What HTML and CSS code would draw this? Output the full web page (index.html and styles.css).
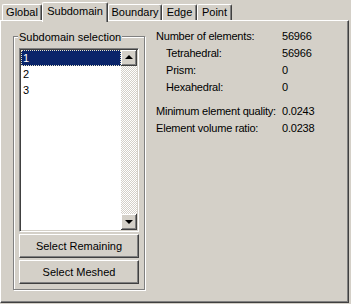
FILE: index.html
```html
<!DOCTYPE html>
<html lang="en">
<head>
    <meta charset="UTF-8">
    <title>Mesh Statistics</title>
    <link rel="stylesheet" href="styles.css">
</head>
<body>
<div class="tabs">
    <div class="tab tab-global">Global</div>
    <div class="tab tab-sub current">Subdomain</div>
    <div class="tab tab-bnd">Boundary</div>
    <div class="tab tab-edge">Edge</div>
    <div class="tab tab-point">Point</div>
</div>
<div class="panel">
    <div class="group">
        <span class="group-label">Subdomain selection</span>
        <div class="listbox">
            <ul class="items">
                <li class="current">1</li>
                <li>2</li>
                <li>3</li>
            </ul>
            <div class="scroll">
                <span class="arrow up"></span>
                <span class="track"></span>
                <span class="arrow down"></span>
            </div>
        </div>
        <div class="button first">Select Remaining</div>
        <div class="button">Select Meshed</div>
    </div>
    <div class="stats">
        <div class="row"><span>Number of elements:</span><span>56966</span></div>
        <div class="row sub"><span>Tetrahedral:</span><span>56966</span></div>
        <div class="row sub"><span>Prism:</span><span>0</span></div>
        <div class="row sub"><span>Hexahedral:</span><span>0</span></div>
        <div class="row gap"><span>Minimum element quality:</span><span>0.0243</span></div>
        <div class="row"><span>Element volume ratio:</span><span>0.0238</span></div>
    </div>
</div>
</body>
</html>
```

FILE: styles.css
```css
*{
    box-sizing: border-box;
    margin: 0;
    padding: 0;
}
body{
    background: #d4d0c8;
    font-family: "Liberation Sans", Arial, sans-serif;
    font-size: 11px;
    color: #000;
    width: 351px;
    height: 304px;
    overflow: hidden;
}
ul{
    list-style: none;
}
/*tab row*/
.tabs{
    display: flex;
    align-items: flex-end;
    height: 20px;
    padding-left: 2px;
    position: relative;
    z-index: 1;
}
.tab{
    height: 16px;
    line-height: 15px;
    text-align: center;
    border-top: 1px solid #fff;
    border-left: 1px solid #fff;
    border-right: 1px solid #404040;
    box-shadow: inset -1px 0 #808080;
    border-top-left-radius: 2px;
    border-top-right-radius: 2px;
    background: #d4d0c8;
}
.tab-global{ width: 40px; }
.tab-sub{ width: 66px; }
.tab-bnd{ width: 54px; }
.tab-edge{ width: 35px; }
.tab-point{ width: 35px; }
.tab.current{
    height: 20px;
    line-height: 16px;
    margin-bottom: -2px;
}
/*panel body*/
.panel{
    width: 349px;
    height: 283px;
    display: flex;
    align-items: flex-start;
    padding: 6px 0 0 12px;
    border-top: 1px solid #fff;
    border-left: 1px solid #fff;
    border-right: 1px solid #404040;
    border-bottom: 1px solid #404040;
    box-shadow: inset -1px -1px #808080;
}
/*group box*/
.group{
    position: relative;
    width: 132px;
    height: 254px;
    margin-top: 9px;
    padding: 11px 5px 5px 5px;
    border: 1px solid #808080;
    box-shadow: inset 1px 1px #fff, 1px 1px #fff;
}
.group-label{
    position: absolute;
    top: -7px;
    left: 4px;
    padding: 0 1px;
    line-height: 14px;
    background: #d4d0c8;
}
.listbox{
    width: 120px;
    height: 184px;
    display: flex;
    padding: 1px;
    border-top: 1px solid #808080;
    border-left: 1px solid #808080;
    border-right: 1px solid #fff;
    border-bottom: 1px solid #fff;
    box-shadow: inset 1px 1px #404040, inset -1px -1px #d4d0c8;
}
.items{
    width: 100px;
    background: #fff;
}
.items li{
    height: 16px;
    line-height: 15px;
    padding-left: 1px;
    border: 1px solid transparent;
}
.items li.current{
    background: #0a246a;
    color: #fff;
    border: 1px dotted #e8e4c8;
}
.scroll{
    width: 16px;
    display: flex;
    flex-direction: column;
}
.track{
    flex: 1;
    background-image: conic-gradient(#fff 25%, #d4d0c8 0 50%, #fff 0 75%, #d4d0c8 0);
    background-size: 2px 2px;
}
.arrow{
    height: 16px;
    display: flex;
    align-items: center;
    justify-content: center;
    background: #d4d0c8;
    border-right: 1px solid #404040;
    border-bottom: 1px solid #404040;
    box-shadow: inset 1px 1px #fff, inset -1px -1px #808080;
}
.arrow::after{
    content: "";
    width: 0;
    height: 0;
    border-left: 4px solid transparent;
    border-right: 4px solid transparent;
}
.arrow.up::after{
    border-bottom: 4px solid #000;
    margin-top: -1px;
}
.arrow.down::after{
    border-top: 4px solid #000;
    margin-top: 1px;
}
/*push buttons*/
.button{
    width: 120px;
    height: 24px;
    margin-top: 2px;
    line-height: 22px;
    text-align: center;
    border-top: 1px solid #fff;
    border-left: 1px solid #fff;
    border-right: 1px solid #404040;
    border-bottom: 1px solid #404040;
    box-shadow: inset -1px -1px #808080;
}
/*statistics on the right*/
.stats{
    margin-left: 11px;
    padding-top: 1px;
    letter-spacing: -0.2px;
}
.row{
    display: grid;
    grid-template-columns: 126px auto;
    line-height: 17px;
    white-space: nowrap;
}
.row.sub span:first-child{
    padding-left: 10px;
}
.row.gap{
    margin-top: 7px;
}
```
